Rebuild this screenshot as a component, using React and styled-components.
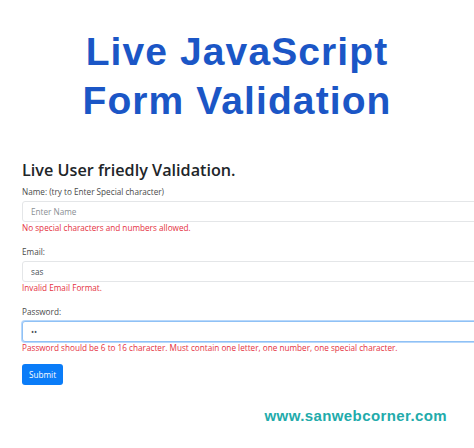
import React from 'react';
import styled, { createGlobalStyle } from 'styled-components';

const GlobalStyle = createGlobalStyle`
  html, body {
    margin: 0;
    padding: 0;
    background: #ffffff;
    overflow: hidden;
  }
  body {
    font-family: "Open Sans", "Liberation Sans", sans-serif;
  }
`;

const Page = styled.div`
  width: 474px;
  height: 448px;
  overflow: hidden;
`;

const Banner = styled.h1`
  margin: 0;
  padding-top: 27px;
  text-align: center;
  font-family: "Liberation Sans", Arial, sans-serif;
  font-weight: 700;
  font-size: 39px;
  line-height: 49px;
  letter-spacing: 1.1px;
  color: #1b56c6;
`;

const Form = styled.form`
  padding-left: 22px;
  width: 470px;
`;

const Heading = styled.h2`
  margin: 35px 0 0;
  font-size: 16.2px;
  font-weight: 600;
  line-height: 20px;
  color: #212529;
`;

const Group = styled.div`
  margin-top: ${({ $first }) => ($first ? '6px' : '12px')};
`;

const Label = styled.label`
  display: block;
  font-size: 8.2px;
  line-height: 12px;
  color: #4a4a4a;
`;

const Input = styled.input`
  display: block;
  box-sizing: border-box;
  margin-top: 3px;
  width: 100%;
  height: 21px;
  padding: 0 8px;
  font-family: inherit;
  font-size: 8.2px;
  color: #495057;
  background: #fff;
  border: 1px solid ${({ $focus }) => ($focus ? '#8fc1f5' : '#e4e6e8')};
  box-shadow: ${({ $focus }) => ($focus ? '0 0 0 1px #b8d8fb' : 'none')};
  border-radius: 3px;
  outline: none;
  &::placeholder {
    color: #8a8f94;
  }
`;

const Error = styled.div`
  font-size: 8.2px;
  line-height: 12px;
  color: #e5303e;
`;

const Button = styled.button`
  margin-top: 10px;
  height: 21px;
  padding: 0 7px;
  font-family: inherit;
  font-size: 8.2px;
  color: #fff;
  background: #0a7cf8;
  border: none;
  border-radius: 3px;
`;

const Site = styled.div`
  margin: 22px 27px 0 0;
  text-align: right;
  font-family: "Liberation Sans", Arial, sans-serif;
  font-weight: 700;
  font-size: 15px;
  line-height: 18px;
  letter-spacing: 0.4px;
  color: #22abab;
`;

export default function App() {
  return (
    <Page>
      <GlobalStyle />
      <Banner>
        Live JavaScript
        <br />
        Form Validation
      </Banner>
      <Form onSubmit={(e) => e.preventDefault()}>
        <Heading>Live User friedly Validation.</Heading>
        <Group $first>
          <Label>Name: (try to Enter Special character)</Label>
          <Input placeholder="Enter Name" />
          <Error>No special characters and numbers allowed.</Error>
        </Group>
        <Group>
          <Label>Email:</Label>
          <Input defaultValue="sas" />
          <Error>Invalid Email Format.</Error>
        </Group>
        <Group>
          <Label>Password:</Label>
          <Input type="password" defaultValue="ab" $focus />
          <Error>
            Password should be 6 to 16 character. Must contain one letter, one number, one special character.
          </Error>
        </Group>
        <Button type="submit">Submit</Button>
      </Form>
      <Site>www.sanwebcorner.com</Site>
    </Page>
  );
}
